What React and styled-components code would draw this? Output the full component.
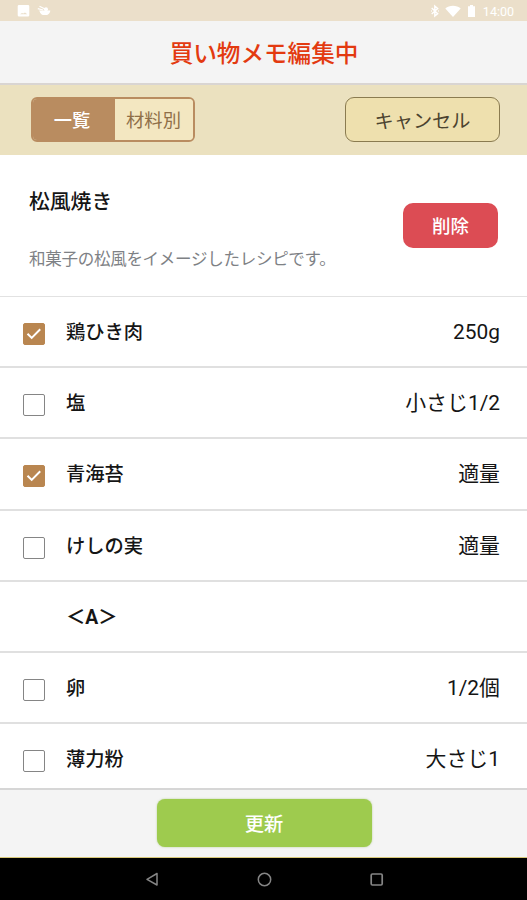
import React, { useState } from 'react'
import styled, { createGlobalStyle } from 'styled-components'

const GlobalStyles = createGlobalStyle`
    :root {
        --cream: #ebe1bf;
        --brown: #b98c60;
        --grey: #f4f4f4;
        --text: #151515;
    }
    * {
        box-sizing: border-box;
    }
    body {
        margin: 0;
        background: #fff;
        color: var(--text);
        font-family: Roboto, 'Noto Sans CJK JP', sans-serif;
    }
    button {
        padding: 0;
        font-family: inherit;
        cursor: pointer;
    }
`

const ScreenStyles = styled.div`
    display: flex;
    flex-direction: column;
    width: 527px;
    height: 900px;
    overflow: hidden;
`

const StatusStyles = styled.div`
    flex: none;
    display: flex;
    align-items: center;
    justify-content: space-between;
    height: 21px;
    padding: 0 13px 0 17px;
    background: #ebdfca;
    color: #fff;
    font-size: 12.5px;
    svg {
        display: block;
    }
    .status__group {
        display: flex;
        align-items: center;
        padding-top: 1px;
    }
`

const HeaderStyles = styled.header`
    flex: none;
    display: flex;
    align-items: center;
    justify-content: center;
    height: 64px;
    padding: 5px 0 0 1px;
    background: var(--grey);
    border-bottom: solid 2px #d9d5d2;
    h1 {
        margin: 0;
        color: #e33a10;
        font-size: 23.6px;
        font-weight: 500;
        line-height: 1;
    }
`

const ToolbarStyles = styled.div`
    flex: none;
    display: flex;
    justify-content: space-between;
    height: 70px;
    padding: 12px 27px 0 31px;
    background: var(--cream);
`

const Segments = styled.div`
    display: flex;
    width: 164px;
    height: 45px;
    border: solid 2px var(--brown);
    border-radius: 6px;
    overflow: hidden;
`

const Segment = styled.button`
    width: ${({ $active }) => ($active ? '82px' : '78px')};
    padding: 0 ${({ $active }) => ($active ? '4px' : '1px')} 1px 0;
    border: 0;
    background: ${({ $active }) => ($active ? 'var(--brown)' : '#f3e7c1')};
    color: ${({ $active }) => ($active ? '#fff' : '#8f6f48')};
    font-size: 18.3px;
    font-weight: ${({ $active }) => ($active ? 500 : 400)};
`

const CancelButton = styled.button`
    width: 155px;
    height: 45px;
    border: solid 1px #8a7b50;
    border-radius: 9px;
    background: #eee0ae;
    color: #4b432f;
    font-size: 19.2px;
`

const RecipeStyles = styled.section`
    flex: none;
    display: flex;
    justify-content: space-between;
    height: 142px;
    padding: 35px 29px 0 29px;
    border-bottom: solid 1px #e2e2e2;
    h2 {
        margin: 0;
        font-size: 20.8px;
        font-weight: 500;
        line-height: 24px;
    }
    p {
        margin: 34px 0 0;
        color: #7e8185;
        font-size: 16.55px;
        letter-spacing: -0.3px;
        line-height: 24px;
        white-space: nowrap;
    }
`

const DeleteButton = styled.button`
    width: 95px;
    height: 45px;
    margin-top: 13px;
    padding-bottom: 1px;
    border: 0;
    border-radius: 10px;
    background: #dc4c54;
    color: #fff;
    font-size: 18.5px;
    font-weight: 500;
`

const ListStyles = styled.ul`
    flex: 1;
    min-height: 0;
    margin: 0;
    padding: 0;
    overflow: hidden;
    list-style: none;
`

const ItemStyles = styled.li`
    display: flex;
    align-items: center;
    height: 71.2px;
    padding: 0 27px 0 23px;
    border-bottom: solid 2px #e0e0e0;
    .item__name {
        flex: 1;
        padding-top: 3px;
        font-size: 19.3px;
        font-weight: ${({ $heading }) => ($heading ? 700 : 500)};
        line-height: 28px;
    }
    .item__amount {
        padding-top: 1px;
        font-size: 20.9px;
        line-height: 28px;
    }
`

const CheckSlot = styled.div`
    width: 43px;
    padding-top: 5px;
`

const CheckBox = styled.button`
    display: flex;
    align-items: center;
    justify-content: center;
    width: 22px;
    height: 22px;
    border: solid 1.5px ${({ $checked }) => ($checked ? '#b98650' : '#858585')};
    border-radius: 2px;
    background: ${({ $checked }) => ($checked ? '#b98650' : '#fff')};
`

const FooterStyles = styled.footer`
    flex: none;
    display: flex;
    justify-content: center;
    height: 70px;
    padding: 9px 0 0 1px;
    background: var(--grey);
    border-top: solid 2px #d6d6d6;
    border-bottom: solid 1px #d8c878;
`

const UpdateButton = styled.button`
    width: 215px;
    height: 48px;
    border: 0;
    border-radius: 8px;
    background: #9ecb4e;
    box-shadow: 0 0 2px rgba(120, 170, 50, 0.5);
    color: #fff;
    font-size: 19.3px;
    font-weight: 500;
`

const NavStyles = styled.nav`
    flex: none;
    display: flex;
    justify-content: center;
    gap: 96px;
    height: 42px;
    padding-top: 13px;
    background: #000;
`

const items = [
    { name: '鶏ひき肉', amount: '250g', checked: true },
    { name: '塩', amount: '小さじ1/2' },
    { name: '青海苔', amount: '適量', checked: true },
    { name: 'けしの実', amount: '適量' },
    { name: '＜A＞', heading: true },
    { name: '卵', amount: '1/2個' },
    { name: '薄力粉', amount: '大さじ1' },
]

const StatusBar = () => (
    <StatusStyles>
        <div className="status__group">
            <svg width="36" height="14" viewBox="0 0 36 14" fill="#fff">
                <path
                    fillRule="evenodd"
                    d="M2 1h9a1.3 1.3 0 0 1 1.3 1.3v9A1.3 1.3 0 0 1 11 12.500H2A1.300 1.300 0 0 1 .7 11.300v-9A1.300 1.300 0 0 1 2 1zM3 10.300h7.300L8 8.600 6.300 9.600 5 8.900z"
                />
                <path d="M22 6.500h11.300c0 2.300-1.500 3.800-3.100 4.600h-4.300c-1.800-.9-2.900-2.200-3.100-3.400z" />
                <path
                    d="M20.800 4.600l5.400 1.400M22.500 2.300l6 3"
                    stroke="#fff"
                    strokeWidth="1.200"
                />
                <circle cx="29" cy="5.300" r="2" />
            </svg>
        </div>
        <div className="status__group">
            <svg width="52" height="14" viewBox="0 0 52 14" fill="#fff">
                <path
                    d="M.7 4l6 5.700L3.800 12V2l2.900 2.500-6 5.500M0 7h.8M7 7h.8"
                    fill="none"
                    stroke="#fff"
                    strokeWidth="1.400"
                />
                <path d="M14.300 4.400c4-3.600 11.400-3.600 15.400 0L22 13z" />
                <path d="M37 2.200h2V1h3v1.200h2V13h-7z" />
            </svg>
            14:00
        </div>
    </StatusStyles>
)

const Item = ({ name, amount, checked, heading }) => {
    const [on, setOn] = useState(Boolean(checked))
    return (
        <ItemStyles $heading={heading}>
            <CheckSlot>
                {!heading && (
                    <CheckBox $checked={on} onClick={() => setOn(!on)}>
                        {on && (
                            <svg width="16" height="14" viewBox="0 0 16 14">
                                <path
                                    d="M1.500 6.700l4.200 4.200L14.200 2.300"
                                    fill="none"
                                    stroke="#fff"
                                    strokeWidth="2"
                                />
                            </svg>
                        )}
                    </CheckBox>
                )}
            </CheckSlot>
            <span className="item__name">{name}</span>
            <span className="item__amount">{amount}</span>
        </ItemStyles>
    )
}

const NavBar = () => (
    <NavStyles>
        <svg width="16" height="16" viewBox="0 0 16 16">
            <path
                d="M13 2.500v11.500L3 8.300z"
                fill="none"
                stroke="#858585"
                strokeWidth="1.500"
                strokeLinejoin="round"
            />
        </svg>
        <svg width="16" height="16" viewBox="0 0 16 16">
            <circle
                cx="8.500"
                cy="8.500"
                r="6.200"
                fill="none"
                stroke="#858585"
                strokeWidth="1.500"
            />
        </svg>
        <svg width="16" height="16" viewBox="0 0 16 16">
            <rect
                x="3.200"
                y="3"
                width="11"
                height="11"
                rx="1.200"
                fill="none"
                stroke="#858585"
                strokeWidth="1.700"
            />
        </svg>
    </NavStyles>
)

const App = () => {
    const [tab, setTab] = useState('一覧')
    return (
        <ScreenStyles>
            <GlobalStyles />
            <StatusBar />
            <HeaderStyles>
                <h1>買い物メモ編集中</h1>
            </HeaderStyles>
            <ToolbarStyles>
                <Segments>
                    {['一覧', '材料別'].map((label) => (
                        <Segment
                            key={label}
                            $active={tab === label}
                            onClick={() => setTab(label)}
                        >
                            {label}
                        </Segment>
                    ))}
                </Segments>
                <CancelButton>キャンセル</CancelButton>
            </ToolbarStyles>
            <RecipeStyles>
                <div>
                    <h2>松風焼き</h2>
                    <p>和菓子の松風をイメージしたレシピです。</p>
                </div>
                <DeleteButton>削除</DeleteButton>
            </RecipeStyles>
            <ListStyles>
                {items.map((item) => (
                    <Item key={item.name} {...item} />
                ))}
            </ListStyles>
            <FooterStyles>
                <UpdateButton>更新</UpdateButton>
            </FooterStyles>
            <NavBar />
        </ScreenStyles>
    )
}

export default App
